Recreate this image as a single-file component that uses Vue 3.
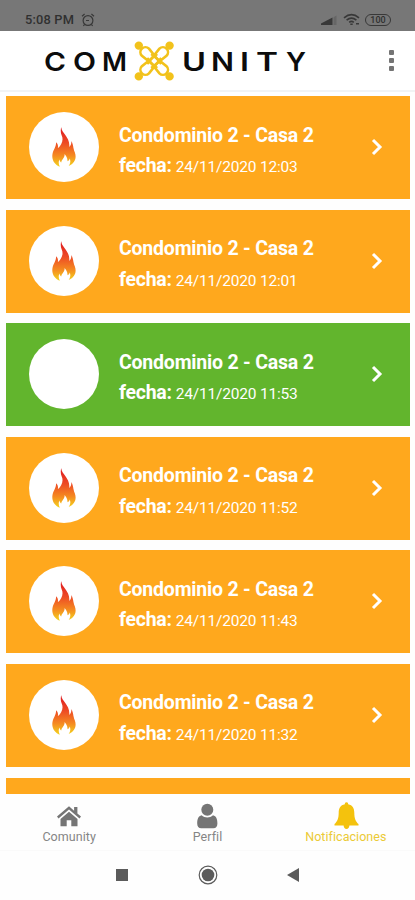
<template>
  <div class="screen">
    <!-- Barra de estado -->
    <div class="status-bar">
      <span class="clock">5:08 PM</span>
      <svg class="alarm" viewBox="0 0 14 14" aria-hidden="true">
        <circle cx="7" cy="7.5" r="4.9" />
        <path d="M1 3.2 3.6 1M13 3.2 10.4 1M3.6 11.4 2.4 13M10.4 11.4l1.2 1.6M5 7.5h3" />
      </svg>
      <div class="status-right">
        <svg class="signal" viewBox="0 0 16 10" aria-hidden="true">
          <path d="M0 10V8.6L11.5 2.6V10z" fill="#383838" />
          <path d="M12.5 2.2 15.5.5V10h-3z" fill="#666" />
        </svg>
        <svg class="wifi" viewBox="0 0 18 14" aria-hidden="true">
          <path d="M1 4.8Q8.5-1.6 16 4.8M3.6 7.2Q8.5 3 13.4 7.2M6.2 9.3Q8.5 7.4 10.8 9.3" />
          <path d="M7.3 11.3h2.4M13 10.8h3" />
        </svg>
        <span class="battery">100</span>
      </div>
    </div>

    <!-- Cabecera con logotipo -->
    <header class="app-header">
      <svg class="logo" viewBox="0 0 264 44" role="img" aria-label="Comunity">
        <text
          v-for="letter in logoLetters"
          :key="letter.char"
          :x="letter.x"
          y="32"
          :textLength="letter.width"
          lengthAdjust="spacingAndGlyphs"
          class="logo-text"
        >{{ letter.char }}</text>
        <!-- Cuatro lazos entrelazados con un punto en cada esquina -->
        <g class="emblem" transform="translate(109.2 22)">
          <g v-for="angle in [0, 90, 180, 270]" :key="angle" :transform="`rotate(${angle})`">
            <path d="M3 7-12.300-5.200A5 5 0 0 1-5.200-12.300L7 3" />
            <circle cx="-15.4" cy="-15.4" r="2.9" class="dot" />
          </g>
        </g>
      </svg>
      <button class="menu" aria-label="Menú"><i></i><i></i><i></i></button>
    </header>

    <!-- Lista de notificaciones -->
    <main class="list">
      <article
        v-for="item in notifications"
        :key="item.time"
        class="card"
        :class="item.type"
      >
        <div class="avatar">
          <svg v-if="item.type === 'fire'" class="flame" viewBox="0 0 24 40" aria-hidden="true">
            <defs>
              <linearGradient id="flame-fill" x1="0" y1="0" x2="0" y2="1">
                <stop offset="0" stop-color="#df1820" />
                <stop offset=".4" stop-color="#ed4b25" />
                <stop offset=".72" stop-color="#f58a20" />
                <stop offset="1" stop-color="#f4d51d" />
              </linearGradient>
            </defs>
            <path
              fill="url(#flame-fill)"
              d="M9.3 0C9 6 18.5 10 17.2 20c1.7-1.5 2.5-4 2.1-6.1 2.2 3.7 1.6 6.7 3.5 11.3 2.5 7-1.1 11.8-6.1 13.8 2-3 2-5.5.9-7.5-.2 1.5-.8 2.3-2.1 2.8.2-3.800-1.700-6-2.900-7.400.3 3.900-2.700 5.100-3.400 8.500C8.300 34.800 7.700 33.900 7.500 32.500c-1.200 2.300-1 4.500.3 7.200C2.300 37.700-.5 32.700.5 27.100 1 23 4 20.500 4.200 15.200c1.700 1.800 2.200 3.800 1.600 6C9.400 18.400 11.900 13 9.700 8.500 8.500 5.800 8.500 2.500 9.300 0z"
            />
          </svg>
        </div>
        <div class="info">
          <h2>Condominio 2 - Casa 2</h2>
          <p><b>fecha:</b> <span>24/11/2020 {{ item.time }}</span></p>
        </div>
        <svg class="chevron" viewBox="0 0 12 18" aria-hidden="true">
          <path d="m2 2 7 7-7 7" />
        </svg>
      </article>
      <div class="card"></div>
    </main>

    <!-- Pestañas inferiores -->
    <nav class="tabs">
      <div class="tab">
        <svg viewBox="0 0 26 28" aria-hidden="true">
          <path d="M13 9.7 4.5 17v7.2h6.2v-6h4.6v6h6.2V17z" />
          <path d="M13 4.3 1 14.6l1.5 1.8L13 7.4l10.5 9 1.5-1.8-3.6-3.1V5h-3.3v3.7z" />
        </svg>
        <span>Comunity</span>
      </div>
      <div class="tab">
        <svg viewBox="0 0 26 28" aria-hidden="true">
          <circle cx="13.3" cy="7.7" r="6" />
          <path d="M7.600 13.300C4.300 14 3.200 17.500 3.200 21.500c0 3 1.400 4.700 4 4.700h12.200c2.600 0 4-1.700 4-4.700 0-4-1.100-7.500-4.400-8.200-3.300 2.900-8.100 2.900-11.400 0z" />
        </svg>
        <span>Perfil</span>
      </div>
      <div class="tab active">
        <svg viewBox="0 0 26 28" aria-hidden="true">
          <path d="M13.5.2c-1.2 0-1.8.9-1.6 2-4.7.9-6.2 4.3-6.2 8.5 0 6-1.5 8.8-4.2 11.4v1.3h9.1c.2 2.2 1.2 3.5 2.9 3.5s2.7-1.3 2.9-3.5h9.1v-1.3c-2.7-2.6-4.2-5.4-4.2-11.4 0-4.2-1.5-7.6-6.2-8.5.2-1.1-.4-2-1.6-2z" />
        </svg>
        <span>Notificaciones</span>
      </div>
    </nav>

    <!-- Navegación del sistema -->
    <div class="system-nav">
      <svg viewBox="0 0 20 20" aria-hidden="true"><path d="M4 4h12v12H4z" /></svg>
      <svg viewBox="0 0 20 20" aria-hidden="true">
        <circle cx="10" cy="10" r="8.8" fill="none" stroke="#5b5b5b" stroke-width="1.2" />
        <circle cx="10" cy="10" r="6.3" />
      </svg>
      <svg viewBox="0 0 20 20" aria-hidden="true"><path d="M3 10 15 3v14z" /></svg>
    </div>
  </div>
</template>

<script setup>
// Posición y ancho de cada letra del logotipo
const logoLetters = [
  { char: 'C', x: -1, width: 22 },
  { char: 'O', x: 28, width: 23 },
  { char: 'M', x: 57, width: 25 },
  { char: 'U', x: 137, width: 24 },
  { char: 'N', x: 166, width: 23 },
  { char: 'I', x: 195, width: 9 },
  { char: 'T', x: 211, width: 22 },
  { char: 'Y', x: 241, width: 20 },
]

const notifications = [
  { time: '12:03', type: 'fire' },
  { time: '12:01', type: 'fire' },
  { time: '11:53', type: 'ok' },
  { time: '11:52', type: 'fire' },
  { time: '11:43', type: 'fire' },
  { time: '11:32', type: 'fire' },
]
</script>

<style>
body {
  margin: 0;
  background: #fefefe;
}
</style>

<style scoped>
.screen {
  display: flex;
  flex-direction: column;
  width: 415px;
  height: 900px;
  overflow: hidden;
  background: #fefefe;
  font-family: Roboto, sans-serif;
}

/* Barra de estado */
.status-bar {
  display: flex;
  align-items: center;
  box-sizing: border-box;
  height: 31px;
  flex-shrink: 0;
  padding: 8px 24px 0 25px;
  background: #777;
  color: #303030;
}

.clock {
  width: 50px;
  font-size: 12.8px;
  font-weight: 500;
  letter-spacing: 0.2px;
  white-space: nowrap;
}

.alarm {
  width: 14px;
  height: 14px;
  margin-left: 6px;
  fill: none;
  stroke: #383838;
  stroke-width: 1.2;
}

.status-right {
  display: flex;
  align-items: center;
  margin-left: auto;
}

.signal {
  width: 16px;
  height: 10px;
  margin-right: 6px;
}

.wifi {
  width: 18px;
  height: 14px;
  margin-right: 4px;
  fill: none;
  stroke: #383838;
  stroke-width: 1.6;
}

.battery {
  box-sizing: border-box;
  width: 26px;
  height: 12px;
  border: 1.3px solid #383838;
  border-radius: 6px;
  font-size: 9px;
  font-weight: 500;
  line-height: 10px;
  text-align: center;
}

/* Cabecera */
.app-header {
  display: flex;
  align-items: center;
  justify-content: space-between;
  box-sizing: border-box;
  height: 61px;
  flex-shrink: 0;
  padding: 0 21px 0 45px;
  border-bottom: 2px solid #f1f3f4;
  background: #fff;
}

.logo {
  width: 264px;
  height: 44px;
  overflow: visible;
}

.logo-text {
  fill: #0c0c0c;
  font-family: Inter, sans-serif;
  font-size: 26px;
  font-weight: 600;
}

.emblem {
  fill: none;
  stroke: #f2c21b;
  stroke-width: 2.6;
}

.dot {
  fill: #f2c21b;
}

.menu {
  display: flex;
  flex-direction: column;
  gap: 3px;
  padding: 0;
  border: 0;
  background: none;
}

.menu i {
  width: 5px;
  height: 5px;
  border-radius: 1px;
  background: #747474;
}

/* Lista */
.list {
  display: flex;
  flex-direction: column;
  gap: 10.6px;
  box-sizing: border-box;
  height: 701.5px;
  flex-shrink: 0;
  padding: 4px 5px 0 6px;
  overflow: hidden;
}

.card {
  display: flex;
  align-items: center;
  box-sizing: border-box;
  height: 103px;
  flex-shrink: 0;
  padding: 0 27px 0 23px;
  background: #ffa81d;
  color: #fff;
}

.card.ok {
  background: #62b52d;
}

.avatar {
  display: flex;
  align-items: center;
  justify-content: center;
  width: 70px;
  height: 70px;
  margin-top: -1px;
  border-radius: 50%;
  background: #fff;
}

.flame {
  width: 24px;
  height: 40px;
}

.info {
  flex: 1;
  margin-left: 20px;
  padding-top: 8px;
}

.info h2,
.info p {
  margin: 0;
  line-height: 30.5px;
  white-space: nowrap;
}

.info h2 {
  font-size: 19.5px;
  font-weight: 700;
  letter-spacing: -0.2px;
}

.info b {
  font-size: 19.5px;
  letter-spacing: -0.25px;
}

.info span {
  font-size: 15.5px;
  letter-spacing: -0.2px;
}

.chevron {
  width: 12px;
  height: 18px;
  margin-top: -1px;
  fill: none;
  stroke: #fff;
  stroke-width: 3;
}

/* Pestañas */
.tabs {
  display: grid;
  grid-template-columns: repeat(3, 1fr);
  height: 57px;
  flex-shrink: 0;
  box-sizing: border-box;
  padding-top: 8.5px;
  border-bottom: 1px solid #fafafa;
}

.tab {
  display: flex;
  flex-direction: column;
  align-items: center;
  color: #858585;
}

.tab svg {
  width: 26px;
  height: 28px;
  fill: #757575;
}

.tab span {
  font-size: 12.5px;
  line-height: 14px;
  letter-spacing: 0.05px;
}

.tab.active {
  color: #ebca35;
}

.tab.active svg {
  fill: #f4c20d;
}

/* Navegación del sistema */
.system-nav {
  display: flex;
  justify-content: center;
  align-items: center;
  gap: 66px;
  height: 49px;
}

.system-nav svg {
  width: 20px;
  height: 20px;
  fill: #5b5b5b;
}
</style>
